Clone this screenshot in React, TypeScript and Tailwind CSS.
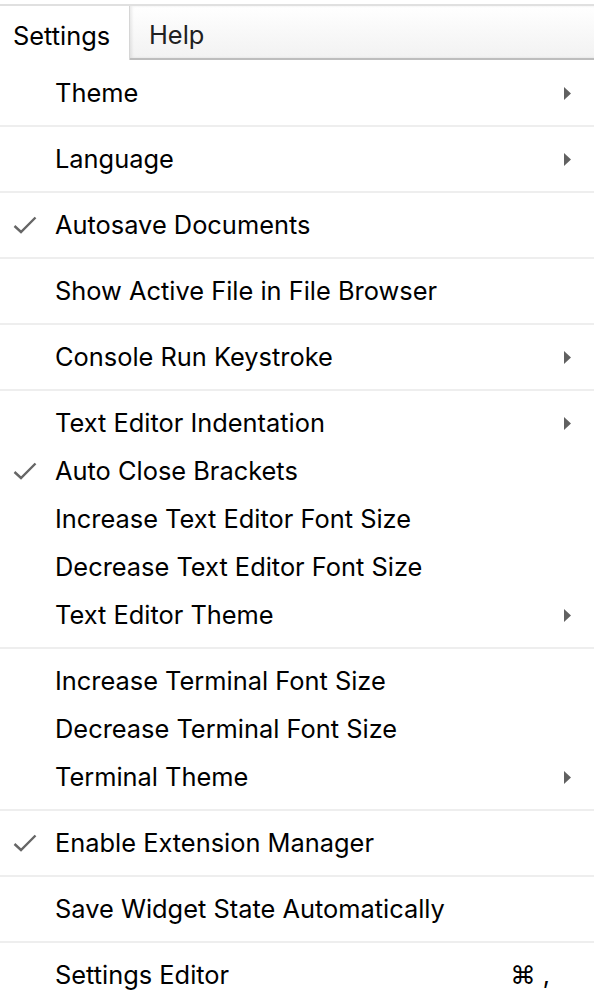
import React from "react";

type Item = { label: string; checked?: boolean; sub?: boolean; shortcut?: string };

const groups: Item[][] = [
  [{ label: "Theme", sub: true }],
  [{ label: "Language", sub: true }],
  [{ label: "Autosave Documents", checked: true }],
  [{ label: "Show Active File in File Browser" }],
  [{ label: "Console Run Keystroke", sub: true }],
  [
    { label: "Text Editor Indentation", sub: true },
    { label: "Auto Close Brackets", checked: true },
    { label: "Increase Text Editor Font Size" },
    { label: "Decrease Text Editor Font Size" },
    { label: "Text Editor Theme", sub: true },
  ],
  [
    { label: "Increase Terminal Font Size" },
    { label: "Decrease Terminal Font Size" },
    { label: "Terminal Theme", sub: true },
  ],
  [{ label: "Enable Extension Manager", checked: true }],
  [{ label: "Save Widget State Automatically" }],
  [{ label: "Settings Editor", shortcut: "⌘ ," }],
];

function Check() {
  return (
    <svg width="24" height="18" viewBox="0 0 24 18" className="block">
      <path d="M1.5 10 L8 16 L22.5 1.5" fill="none" stroke="#666" strokeWidth="2.4" />
    </svg>
  );
}

function Arrow() {
  return (
    <svg width="8" height="13" viewBox="0 0 8 13" className="block">
      <path d="M0 0 L7 6.5 L0 13 Z" fill="#616161" />
    </svg>
  );
}

function Row({ item }: { item: Item }) {
  return (
    <div className="flex h-[48px] items-center text-[25.4px] text-black">
      <div className="flex w-[55px] shrink-0 items-center pl-[13px]">{item.checked ? <Check /> : null}</div>
      <div className="flex-1 leading-none">{item.label}</div>
      {item.sub ? (
        <div className="pr-[22px]">
          <Arrow />
        </div>
      ) : null}
      {item.shortcut ? <div className="pr-[44px] leading-none">{item.shortcut}</div> : null}
    </div>
  );
}

export default function App() {
  return (
    <div
      className="relative h-[1000px] w-[594px] overflow-hidden bg-white"
      style={{ fontFamily: "Inter, 'Noto Sans', sans-serif" }}
    >
      <div className="mt-[4px] h-[2px] bg-[#e0e0e0]" />
      <div className="flex h-[54px]">
        <div className="flex w-[130px] items-center border-r border-[#d6d6d6] bg-white pl-[13px] pt-[6px] text-[25.4px] text-black">
          Settings
        </div>
        <div className="flex flex-1 items-center border-b-2 border-[#bdbdbd] bg-gradient-to-b from-white to-[#f2f2f2] pl-[19px] pt-[6px] text-[25.4px] text-[#212121] shadow-[inset_2px_0_3px_rgba(0,0,0,0.08)]">
          Help
        </div>
      </div>
      <div className="pt-[9px]">
        {groups.map((g, gi) => (
          <div key={gi}>
            {gi > 0 ? <div className="my-[8px] h-[2px] bg-[#eeeeee]" /> : null}
            {g.map((it, ii) => (
              <Row key={ii} item={it} />
            ))}
          </div>
        ))}
      </div>
    </div>
  );
}
